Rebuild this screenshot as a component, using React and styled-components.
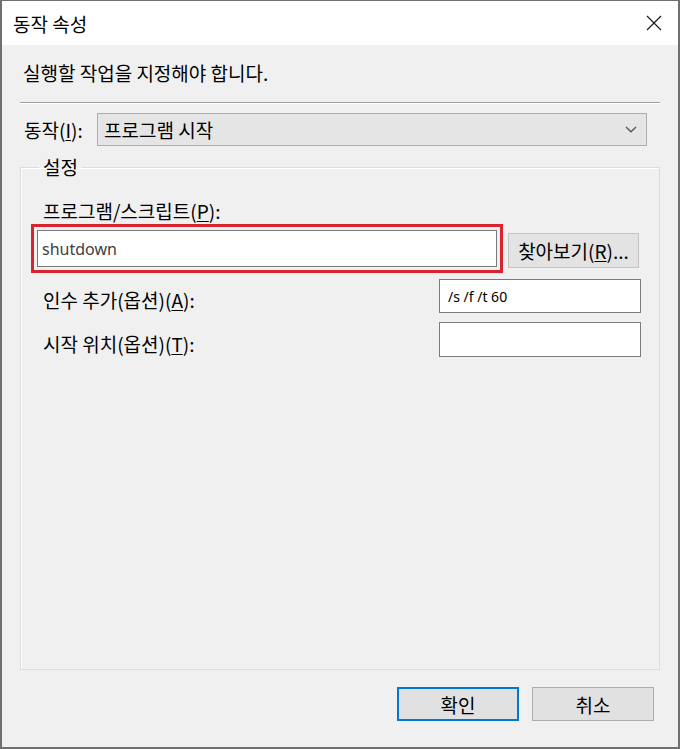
import React from 'react';
import styled, { createGlobalStyle } from 'styled-components';

const GlobalStyle = createGlobalStyle`
  html, body {
    margin: 0;
    padding: 0;
    background: #ffffff;
  }
  * {
    box-sizing: border-box;
  }
`;

const fontStack = `"Noto Sans CJK KR", "Noto Sans", sans-serif`;

const Window = styled.div`
  width: 680px;
  height: 749px;
  display: flex;
  flex-direction: column;
  border: 2px solid #707070;
  border-top-width: 1px;
  background: #f0f0f0;
  font-family: ${fontStack};
  font-size: 19px;
  color: #000;
`;

const TitleBar = styled.div`
  height: 44px;
  flex: none;
  display: flex;
  align-items: center;
  justify-content: space-between;
  background: #ffffff;
  padding: 0 14px 0 11px;
`;

const CloseButton = styled.div`
  width: 20px;
  height: 20px;
  display: flex;
  align-items: center;
  justify-content: center;
`;

const Body = styled.div`
  flex: 1;
  display: flex;
  flex-direction: column;
  padding-top: 16px;
`;

const Instruction = styled.div`
  line-height: 24px;
  padding-left: 21px;
`;

const Separator = styled.div`
  height: 2px;
  margin: 17px 18px 0;
  border-top: 1px solid #a0a0a0;
  border-bottom: 1px solid #ffffff;
`;

const ActionRow = styled.div`
  display: flex;
  align-items: center;
  margin: 9px 0 0 22px;
`;

const ActionLabel = styled.span`
  width: 73px;
  line-height: 24px;
`;

const Dropdown = styled.div`
  width: 550px;
  height: 33px;
  display: flex;
  align-items: center;
  justify-content: space-between;
  padding: 0 9px 0 6px;
  background: #e5e5e5;
  border: 1px solid #adadad;
`;

const GroupBox = styled.fieldset`
  margin: 9px 18px 0;
  height: 515px;
  padding: 10px 18px 0 10px;
  border: 1px solid #dcdcdc;
  box-shadow: inset 1px 1px 0 #ffffff;
  min-width: 0;
`;

const Legend = styled.legend`
  margin-left: 8px;
  padding: 0 4px;
  line-height: 24px;
`;

const FieldLabel = styled.div`
  line-height: 24px;
  margin-left: 12px;
  margin-top: ${p => p.$top || 0}px;
`;

const Mnemonic = styled.span`
  text-decoration: underline;
  text-underline-offset: 2px;
`;

const ScriptRow = styled.div`
  display: flex;
  align-items: center;
  margin-top: 1px;
`;

const Highlight = styled.div`
  width: 472px;
  padding: 3px;
  border: 3px solid #d9232e;
`;

const TextBox = styled.div`
  width: ${p => p.$width}px;
  height: ${p => p.$height}px;
  display: flex;
  align-items: center;
  padding-left: ${p => p.$pad || 8}px;
  background: #ffffff;
  border: 1px solid #7a7a7a;
  font-family: "Noto Sans", sans-serif;
  font-size: ${p => p.$size || 14}px;
  color: ${p => p.$color || '#000'};
`;

const Button = styled.div`
  width: ${p => p.$width}px;
  height: ${p => p.$height}px;
  display: flex;
  align-items: center;
  justify-content: center;
  background: #e1e1e1;
  border: ${p => (p.$default ? '2px solid #0078d7' : '1px solid #adadad')};
`;

const BrowseButton = styled(Button)`
  margin: 4px 0 0 5px;
  background: #e3e3e3;
  border-color: #c4c4c4;
`;

const OptionRow = styled.div`
  display: flex;
  justify-content: space-between;
  align-items: center;
  margin-top: ${p => p.$top}px;
`;

const OptionLabel = styled(FieldLabel)`
  padding-top: ${p => p.$shift || 0}px;
`;

const Footer = styled.div`
  display: flex;
  justify-content: flex-end;
  gap: 13px;
  margin: 17px 24px 0 0;
`;

const Chevron = () => (
  <svg width="12" height="7" viewBox="0 0 12 7" fill="none">
    <path d="M1 1 L6 5.8 L11 1" stroke="#555555" strokeWidth="1.3" />
  </svg>
);

const CloseIcon = () => (
  <svg width="16" height="16" viewBox="0 0 16 16" fill="none">
    <path d="M1 1 L15 15 M15 1 L1 15" stroke="#1a1a1a" strokeWidth="1.2" />
  </svg>
);

export default function App() {
  return (
    <>
      <GlobalStyle />
      <Window>
        <TitleBar>
          <span>동작 속성</span>
          <CloseButton>
            <CloseIcon />
          </CloseButton>
        </TitleBar>
        <Body>
          <Instruction>실행할 작업을 지정해야 합니다.</Instruction>
          <Separator />
          <ActionRow>
            <ActionLabel>
              동작(<Mnemonic>I</Mnemonic>):
            </ActionLabel>
            <Dropdown>
              <span>프로그램 시작</span>
              <Chevron />
            </Dropdown>
          </ActionRow>
          <GroupBox>
            <Legend>설정</Legend>
            <FieldLabel $top={10}>
              프로그램/스크립트(<Mnemonic>P</Mnemonic>):
            </FieldLabel>
            <ScriptRow>
              <Highlight>
                <TextBox $width={460} $height={37} $pad={4} $size={16} $color="#404040">
                  shutdown
                </TextBox>
              </Highlight>
              <BrowseButton $width={131} $height={35}>
                찾아보기(<Mnemonic>R</Mnemonic>)...
              </BrowseButton>
            </ScriptRow>
            <OptionRow $top={6}>
              <OptionLabel $shift={8}>
                인수 추가(옵션)(<Mnemonic>A</Mnemonic>):
              </OptionLabel>
              <TextBox $width={202} $height={34}>/s /f /t 60</TextBox>
            </OptionRow>
            <OptionRow $top={9}>
              <OptionLabel $shift={8}>
                시작 위치(옵션)(<Mnemonic>T</Mnemonic>):
              </OptionLabel>
              <TextBox $width={202} $height={35} />
            </OptionRow>
          </GroupBox>
          <Footer>
            <Button $default $width={122} $height={34}>확인</Button>
            <Button $width={122} $height={34}>취소</Button>
          </Footer>
        </Body>
      </Window>
    </>
  );
}
